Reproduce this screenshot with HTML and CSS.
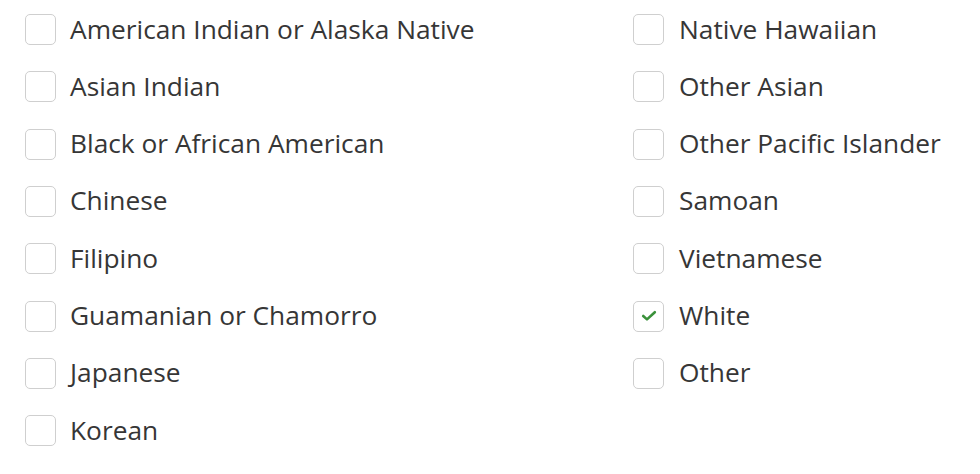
FILE: index.html
```html
<!DOCTYPE html>
<html>
<head>
<meta charset="utf-8">
<link rel="stylesheet" href="styles.css">
</head>
<body>
<div class="options">
  <div class="col">
    <label class="opt"><span class="box"></span><span class="txt">American Indian or Alaska Native</span></label>
    <label class="opt"><span class="box"></span><span class="txt">Asian Indian</span></label>
    <label class="opt"><span class="box"></span><span class="txt">Black or African American</span></label>
    <label class="opt"><span class="box"></span><span class="txt">Chinese</span></label>
    <label class="opt"><span class="box"></span><span class="txt">Filipino</span></label>
    <label class="opt"><span class="box"></span><span class="txt">Guamanian or Chamorro</span></label>
    <label class="opt"><span class="box"></span><span class="txt">Japanese</span></label>
    <label class="opt"><span class="box"></span><span class="txt">Korean</span></label>
  </div>
  <div class="col">
    <label class="opt"><span class="box"></span><span class="txt">Native Hawaiian</span></label>
    <label class="opt"><span class="box"></span><span class="txt">Other Asian</span></label>
    <label class="opt"><span class="box"></span><span class="txt">Other Pacific Islander</span></label>
    <label class="opt"><span class="box"></span><span class="txt">Samoan</span></label>
    <label class="opt"><span class="box"></span><span class="txt">Vietnamese</span></label>
    <label class="opt"><span class="box checked"><svg width="16" height="12" viewBox="0 0 16 12"><path d="M2.2 6 L6 9.4 L13.8 2.2" fill="none" stroke="#3a913a" stroke-width="2.6" stroke-linecap="round" stroke-linejoin="round"/></svg></span><span class="txt">White</span></label>
    <label class="opt"><span class="box"></span><span class="txt">Other</span></label>
  </div>
</div>
</body>
</html>
```

FILE: styles.css
```css
html, body {
  margin: 0;
  padding: 0;
  background: #ffffff;
}
body {
  font-family: "Open Sans", "Liberation Sans", sans-serif;
  color: #363636;
}
.options {
  display: grid;
  grid-template-columns: 608px 1fr;
  padding: 1px 0 0 25px;
}
.col {
  display: flex;
  flex-direction: column;
}
.col + .col .opt {
  gap: 15px;
}
.opt {
  display: flex;
  align-items: center;
  height: 57.3px;
  gap: 14px;
  font-size: 26.3px;
}
.box {
  width: 29px;
  height: 29px;
  border: 1.5px solid #cfcfcf;
  border-radius: 5px;
  display: flex;
  align-items: center;
  justify-content: center;
  flex: none;
}
.txt {
  line-height: 1;
  padding-bottom: 2px;
}
```
